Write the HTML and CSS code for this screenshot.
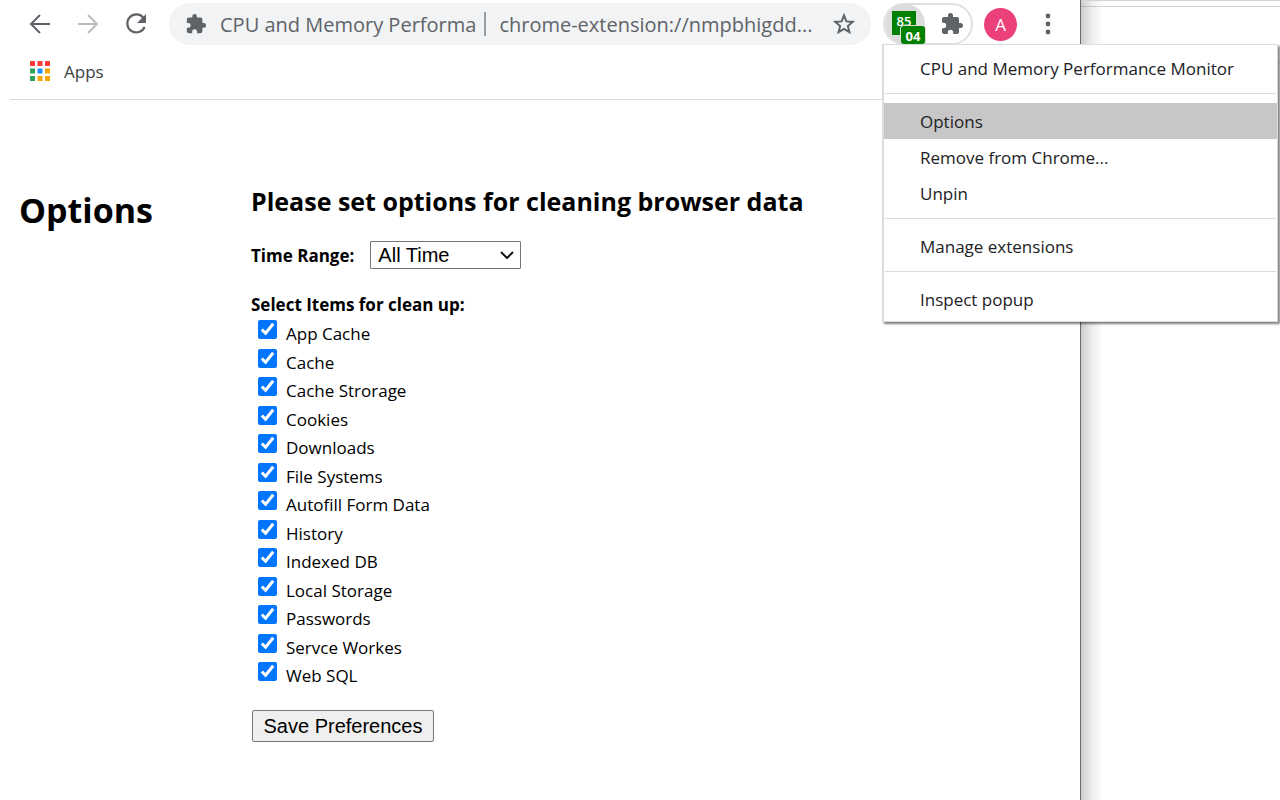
FILE: index.html
```html
<!DOCTYPE html>
<html lang="en">
<head>
  <meta charset="UTF-8" />
  <meta name="viewport" content="width=device-width, initial-scale=1.0"/>
  <title>CPU and Memory Performance Monitor</title>
  <link rel="stylesheet" href="styles.css">
</head>
<body>
  <div class="desktop">
    <div class="browser">
      <header class="toolbar">
        <button class="icon-btn" aria-label="Back">
          <svg width="24" height="24" viewBox="0 0 24 24" fill="none" stroke="#5f6368" stroke-width="2"><path d="M22 12H3M12 3l-9 9 9 9"/></svg>
        </button>
        <button class="icon-btn" aria-label="Forward">
          <svg width="24" height="24" viewBox="0 0 24 24" fill="none" stroke="#babcbe" stroke-width="2"><path d="M2 12h19M12 3l9 9-9 9"/></svg>
        </button>
        <button class="icon-btn" aria-label="Reload">
          <svg width="24" height="24" viewBox="0 0 24 24"><path d="M19.5 6A9 9 0 1 0 20.6 15" fill="none" stroke="#5f6368" stroke-width="2.2"/><path d="M22 2v9h-9z" fill="#5f6368"/></svg>
        </button>
        <div class="address">
          <svg class="puzzle" width="22" height="22" viewBox="0 0 24 24" fill="#5f6368"><path d="M20.5 11H19V7a2 2 0 0 0-2-2h-4V3.5a2.5 2.5 0 0 0-5 0V5H4a2 2 0 0 0-2 2v3.8h1.5a2.7 2.7 0 0 1 0 5.4H2V20a2 2 0 0 0 2 2h3.8v-1.5a2.7 2.7 0 0 1 5.4 0V22H17a2 2 0 0 0 2-2v-4h1.5a2.5 2.5 0 0 0 0-5z"/></svg>
          <span class="site">CPU and Memory Performa</span>
          <span class="bar"></span>
          <span class="url">chrome-extension://nmpbhigdd...</span>
          <button class="icon-btn star" aria-label="Bookmark this page">
            <svg width="24" height="24" viewBox="0 0 24 24" fill="none" stroke="#5f6368" stroke-width="2"><path d="M12 3.5l2.4 5.9 6.3.5-4.8 4.1 1.5 6.2-5.4-3.3-5.4 3.3 1.5-6.2-4.8-4.1 6.3-.5z"/></svg>
          </button>
        </div>
        <div class="extensions">
          <button class="monitor" aria-label="CPU and Memory Performance Monitor">
            <span class="cpu">85</span>
            <span class="memory">04</span>
          </button>
          <button class="icon-btn" aria-label="Extensions">
            <svg width="24" height="24" viewBox="0 0 24 24" fill="#5f6368"><path d="M20.5 11H19V7a2 2 0 0 0-2-2h-4V3.5a2.5 2.5 0 0 0-5 0V5H4a2 2 0 0 0-2 2v3.8h1.5a2.7 2.7 0 0 1 0 5.4H2V20a2 2 0 0 0 2 2h3.8v-1.5a2.7 2.7 0 0 1 5.4 0V22H17a2 2 0 0 0 2-2v-4h1.5a2.5 2.5 0 0 0 0-5z"/></svg>
          </button>
        </div>
        <button class="avatar">A</button>
        <button class="icon-btn more" aria-label="Menu">
          <svg width="6" height="22" viewBox="0 0 6 22" fill="#5f6368"><circle cx="3" cy="3" r="2.4"/><circle cx="3" cy="11" r="2.4"/><circle cx="3" cy="19" r="2.4"/></svg>
        </button>
      </header>

      <nav class="bookmarks">
        <a href="#">
          <svg width="20" height="20" viewBox="0 0 20 20">
            <path d="M0 0h5v5H0zM7.5 0h5v5h-5zM15 0h5v5h-5z" fill="#fb3b36"/>
            <path d="M0 7.5h5v5H0zM0 15h5v5H0z" fill="#34a05a"/>
            <path d="M7.5 7.5h5v5h-5z" fill="#1e90ff"/>
            <path d="M15 7.5h5v5h-5zM7.5 15h5v5h-5zM15 15h5v5h-5z" fill="#f9a708"/>
          </svg>
          Apps
        </a>
      </nav>

      <main class="page">
        <h1>Options</h1>
        <form class="options">
          <h2>Please set options for cleaning browser data</h2>
          <div class="range">
            <label for="timeRange">Time Range:</label>
            <div class="select">
              <select id="timeRange">
                <option>All Time</option>
              </select>
              <svg width="14" height="8" viewBox="0 0 14 8" fill="none" stroke="#111" stroke-width="2"><path d="M1 1l6 6 6-6"/></svg>
            </div>
          </div>
          <fieldset>
            <legend>Select Items for clean up:</legend>
            <div class="items">
              <label><input type="checkbox" checked><span>App Cache</span></label>
              <label><input type="checkbox" checked><span>Cache</span></label>
              <label><input type="checkbox" checked><span>Cache Strorage</span></label>
              <label><input type="checkbox" checked><span>Cookies</span></label>
              <label><input type="checkbox" checked><span>Downloads</span></label>
              <label><input type="checkbox" checked><span>File Systems</span></label>
              <label><input type="checkbox" checked><span>Autofill Form Data</span></label>
              <label><input type="checkbox" checked><span>History</span></label>
              <label><input type="checkbox" checked><span>Indexed DB</span></label>
              <label><input type="checkbox" checked><span>Local Storage</span></label>
              <label><input type="checkbox" checked><span>Passwords</span></label>
              <label><input type="checkbox" checked><span>Servce Workes</span></label>
              <label><input type="checkbox" checked><span>Web SQL</span></label>
            </div>
          </fieldset>
          <button type="button" class="save">Save Preferences</button>
        </form>
      </main>
    </div>
    <div class="behind"></div>

    <div class="menu">
      <button>CPU and Memory Performance Monitor</button>
      <hr>
      <button class="active">Options</button>
      <button>Remove from Chrome...</button>
      <button>Unpin</button>
      <hr>
      <button>Manage extensions</button>
      <hr>
      <button>Inspect popup</button>
    </div>
  </div>
</body>
</html>
```
FILE: styles.css
```css
* {
  box-sizing: border-box;
}

body {
  margin: 0;
  font-family: "Open Sans", "Noto Sans", sans-serif;
  font-size: 17px;
  color: #000;
  background-color: #fff;
}

button {
  font-family: inherit;
  padding: 0;
  border: none;
  background: none;
}

svg {
  display: block;
  flex: none;
}

.desktop {
  position: relative;
  display: flex;
  min-height: 100vh;
}

.browser {
  flex: 1;
  min-width: 0;
  border-right: 1px solid #6b6b6b;
}

.behind {
  width: 199px;
  border-top: 1px solid #d4d4d4;
  background:
    linear-gradient(to right, rgba(0,0,0,0.2), rgba(0,0,0,0.08) 10px, transparent 22px),
    linear-gradient(#d8d8d8, #d8d8d8) 0 5px / 100% 1px no-repeat,
    linear-gradient(#d8d8d8, #d8d8d8) 0 61px / 100% 1px no-repeat;
}

/* toolbar */
.toolbar {
  display: flex;
  align-items: center;
  height: 48px;
  padding: 0 17px 0 28px;
}

.toolbar > .icon-btn {
  width: 24px;
  margin-right: 24px;
}

.address {
  display: flex;
  align-items: center;
  flex: 1;
  min-width: 0;
  height: 42px;
  margin-left: -3px;
  padding: 0 15px 0 16px;
  border-radius: 21px;
  background-color: #f1f3f4;
  color: #5f6368;
  font-size: 20px;
  white-space: nowrap;
}

.site {
  margin-left: 13px;
}

.bar {
  width: 2px;
  height: 24px;
  margin: 0 13px 0 8px;
  background-color: #9a9da0;
}

.star {
  margin-left: auto;
}

.extensions {
  display: flex;
  align-items: center;
  width: 90px;
  height: 42px;
  margin: 0 11px 0 12px;
  border: 2px solid #dfe0e2;
  border-radius: 21px;
}

.monitor {
  position: relative;
  width: 40px;
  height: 40px;
  margin-right: 15px;
  border-radius: 50%;
  background-color: #dcdcdc;
  color: #fff;
}

.cpu,
.memory {
  position: absolute;
  background-color: #008000;
  font-size: 13px;
  font-weight: 600;
  text-align: center;
}

.cpu {
  left: 7px;
  top: 7px;
  width: 24px;
  height: 24px;
  line-height: 20px;
}

.memory {
  left: 16px;
  top: 22px;
  width: 24px;
  height: 18px;
  border-radius: 3px;
  font-weight: 700;
  line-height: 20px;
  box-shadow: 0 0 0 1px #dcdcdc;
}

.avatar {
  width: 33px;
  height: 33px;
  margin-right: 28px;
  border-radius: 50%;
  background-color: #ec407a;
  color: #fff;
  font-size: 17px;
}

.toolbar > .more {
  width: 6px;
  margin-right: 12px;
}

.bookmarks {
  height: 52px;
  margin-left: 10px;
  padding: 0 20px;
  border-bottom: 1px solid #d9dadc;
}

.bookmarks a {
  display: flex;
  align-items: center;
  gap: 14px;
  height: 46px;
  color: #3c4043;
  text-decoration: none;
}

/* options page */
.page {
  display: flex;
  padding: 80px 20px 40px 19px;
}

h1 {
  width: 232px;
  margin: 0;
  font-size: 34px;
  line-height: 60px;
}

h2 {
  margin: 0;
  font-size: 25px;
  line-height: 42px;
}

.options {
  flex: 1;
}

.range {
  display: flex;
  align-items: center;
  gap: 16px;
  margin-top: 19px;
}

.range label,
legend {
  font-weight: bold;
  font-size: 17px;
}

.select {
  position: relative;
}

.select select {
  appearance: none;
  width: 151px;
  height: 28px;
  padding: 0 7px;
  border: 1px solid #767676;
  border-radius: 1px;
  background-color: #fff;
  color: #000;
  font-family: "Liberation Sans", Arial, sans-serif;
  font-size: 20px;
}

.select svg {
  position: absolute;
  right: 7px;
  top: 10px;
  pointer-events: none;
}

fieldset {
  margin: 23px 0 0;
  padding: 0;
  border: none;
}

legend {
  padding: 0;
  line-height: 26px;
}

.items {
  display: grid;
  height: 371px;
}

.items label {
  display: flex;
  align-items: flex-start;
  gap: 9px;
  padding-left: 7px;
  line-height: 31px;
  height: 0;
}

.items input {
  width: 19px;
  height: 19px;
  margin: 2px 0 0;
  accent-color: #0075ff;
}

.save {
  width: 182px;
  height: 32px;
  margin: 21px 0 0 1px;
  border: 1px solid #767676;
  border-radius: 2px;
  background-color: #efefef;
  font-family: "Liberation Sans", Arial, sans-serif;
  font-size: 20px;
}

/* context menu */
.menu {
  position: absolute;
  top: 44px;
  right: 2px;
  width: 396px;
  padding: 5px 0 4px;
  border: 1px solid #dadce0;
  border-left-width: 2px;
  background-color: #fff;
  box-shadow: 2px 2px 2px rgba(0,0,0,0.5);
}

.menu button {
  display: block;
  width: 100%;
  height: 36px;
  padding-left: 36px;
  color: #202124;
  font-size: 17px;
  text-align: left;
}

.menu .active {
  background-color: #c7c7c7;
}

.menu hr {
  height: 1px;
  margin: 7px 1px 9px;
  border: none;
  background-color: #dadadc;
}
```
